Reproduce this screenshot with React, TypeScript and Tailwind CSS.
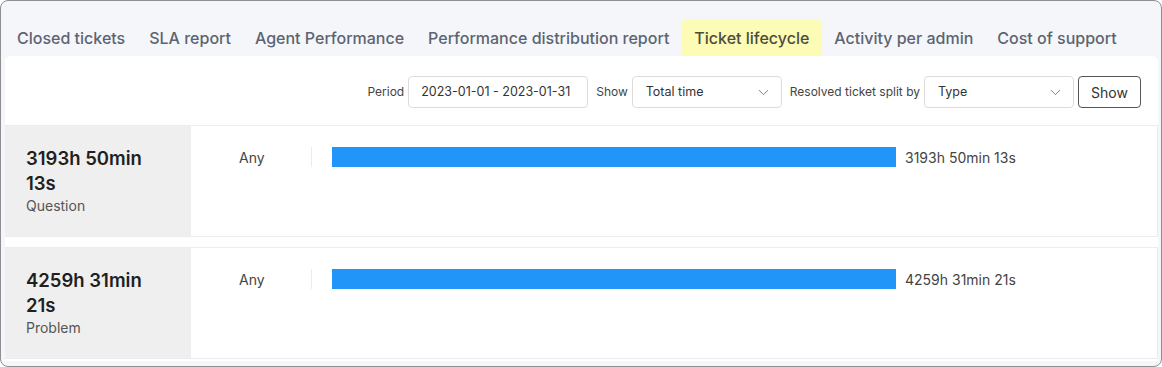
import { ChevronDown } from "lucide-react";

const tabs = [
  "Closed tickets",
  "SLA report",
  "Agent Performance",
  "Performance distribution report",
  "Ticket lifecycle",
  "Activity per admin",
  "Cost of support",
];

const rows = [
  { total: "3193h 50min 13s", type: "Question" },
  { total: "4259h 31min 21s", type: "Problem" },
];

const Select = ({ value }: { value: string }) => {
  return (
    <div className="w-[150px] h-[32px] border border-[#dcdcdc] rounded-[4px] bg-white flex items-center justify-between pl-[13px] pr-[9px] text-[12.5px] text-[#333]">
      <span>{value}</span>
      <ChevronDown size={17} strokeWidth={1.3} className="text-[#777]" />
    </div>
  );
};

const App = () => {
  return (
    <div
      className="w-[1162px] h-[367px] border border-[#8f8f8f] rounded-[8px] bg-[#f5f6fa] flex flex-col pl-[4px] pr-[3px] pb-[5px] overflow-hidden"
      style={{ fontFamily: "Inter, 'Noto Sans', sans-serif" }}
    >
      <div className="flex items-end h-[55px] shrink-0">
        {tabs.map((t) => (
          <div
            key={t}
            className={
              t === "Ticket lifecycle"
                ? "h-[37px] px-[13px] flex items-center bg-[#fcfcb6] rounded-t-[6px] text-[16px] font-medium text-[#4d4d3c]"
                : "h-[37px] px-[12px] flex items-center text-[16px] font-medium text-[#5c6472]"
            }
          >
            {t}
          </div>
        ))}
      </div>
      <div className="flex-1 bg-white rounded-t-[6px] flex flex-col">
        <div className="h-[70px] shrink-0 flex items-start pt-[20px] justify-end gap-[8px] pr-[17px] border-b border-[#ececec]">
          <div className="flex items-center gap-[4px]">
            <span className="text-[12px] text-[#444]">Period</span>
            <div className="w-[180px] h-[32px] border border-[#dcdcdc] rounded-[4px] flex items-center pl-[12px] text-[12.5px] text-[#333]">
              2023-01-01 - 2023-01-31
            </div>
          </div>
          <div className="flex items-center gap-[4px]">
            <span className="text-[12px] text-[#444]">Show</span>
            <Select value="Total time" />
          </div>
          <div className="flex items-center gap-[4px]">
            <span className="text-[12px] text-[#444]">Resolved ticket split by</span>
            <Select value="Type" />
          </div>
          <button className="-ml-[4px] w-[63px] h-[32px] border border-[#555] rounded-[4px] text-[14px] text-[#333] bg-white">
            Show
          </button>
        </div>
        {rows.map((r, i) => (
          <div
            key={r.type}
            className={
              i === 0
                ? "h-[111px] shrink-0 flex border-b border-[#ececec]"
                : "h-[112px] shrink-0 flex border-y border-[#ececec] mt-[10px]"
            }
          >
            <div className="w-[186px] bg-[#efefef] pl-[21px] pt-[20px]">
              <div className="text-[18.5px] font-semibold text-[#1f1f1f] leading-[25px] w-[130px]">
                {r.total}
              </div>
              <div className="text-[14px] text-[#555] -mt-[1px]">{r.type}</div>
            </div>
            <div className="flex-1 flex items-start pt-[21px] pl-[48px] border-r border-[#ececec]">
              <div className="w-[72px] h-[20px] flex items-center text-[14px] text-[#444]">Any</div>
              <div className="h-[20px] border-l border-[#ececec] pl-[20px] flex items-center">
                <div className="w-[564px] h-[20px] bg-[#2196f8]" />
                <span className="ml-[9px] text-[14px] text-[#444]">{r.total}</span>
              </div>
            </div>
          </div>
        ))}
      </div>
    </div>
  );
};

export default App;
